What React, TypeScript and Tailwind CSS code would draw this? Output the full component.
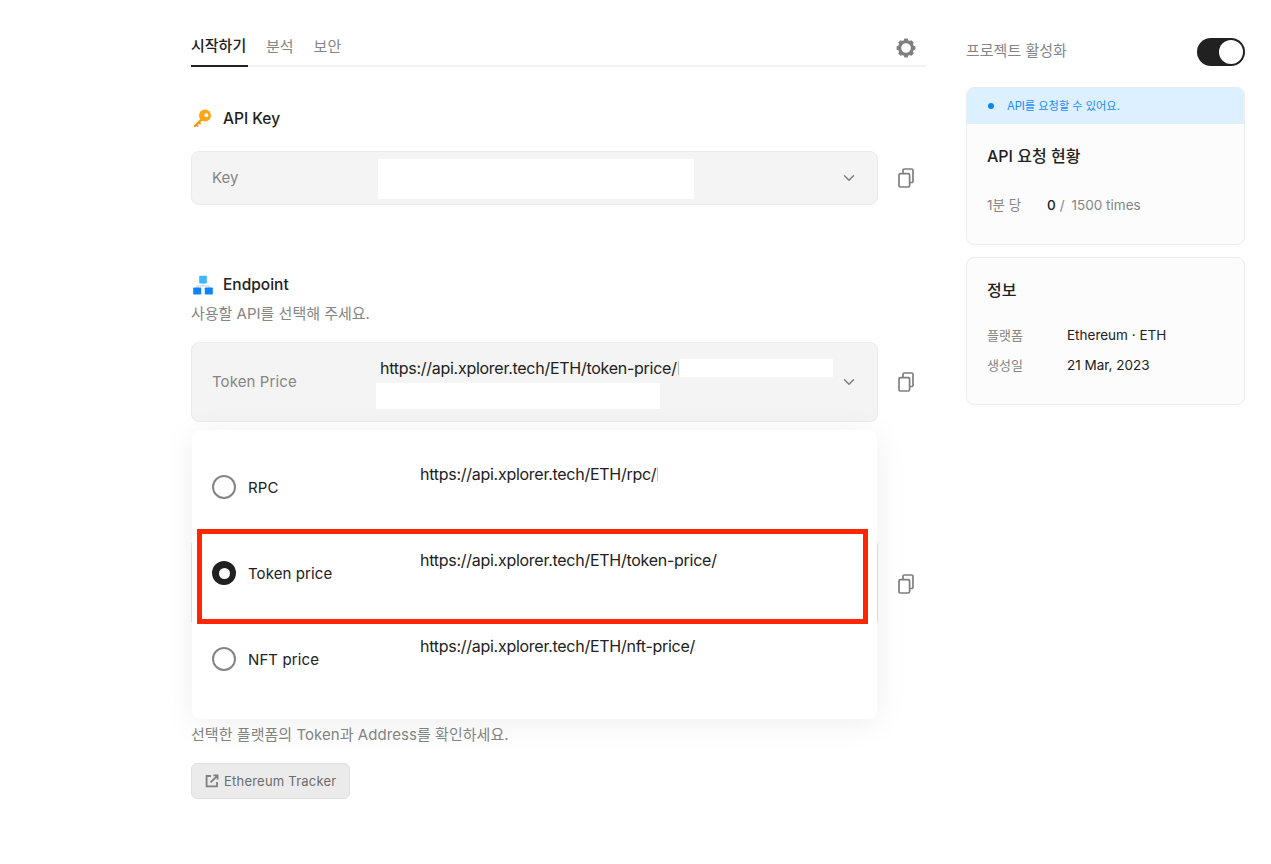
import { LuChevronDown } from "react-icons/lu";

const apis = [
  { name: "RPC", url: "https://api.xplorer.tech/ETH/rpc/", tick: true },
  { name: "Token price", url: "https://api.xplorer.tech/ETH/token-price/", selected: true },
  { name: "NFT price", url: "https://api.xplorer.tech/ETH/nft-price/" },
];

function CopyIcon({ className = "" }: { className?: string }) {
  return (
    <svg width="20" height="20" viewBox="0 0 20 20" fill="none" stroke="#7f7f7f" strokeWidth="1.7" className={`shrink-0 ${className}`}>
      <rect x="3" y="5.6" width="10.6" height="13.4" rx="1.3" />
      <path d="M7 5.4V2.3A1.3 1.3 0 0 1 8.3 1h7.4A1.3 1.3 0 0 1 17 2.3v10.9a1.3 1.3 0 0 1-1.3 1.3h-1.9" />
    </svg>
  );
}

function GearIcon() {
  return (
    <svg width="20" height="20" viewBox="0 0 20 20" fill="#7f7f7f" className="shrink-0">
      <circle cx="10" cy="10" r="6.4" fill="none" stroke="#7f7f7f" strokeWidth="3.2" />
      {[0, 45, 90, 135, 180, 225, 270, 315].map((a) => (
        <rect key={a} x="8" y="0.6" width="4" height="3.4" rx="0.8" transform={`rotate(${a} 10 10)`} />
      ))}
    </svg>
  );
}

function KeyIcon() {
  return (
    <svg width="20" height="20" viewBox="0 0 20 20" className="mt-[2px] shrink-0">
      <path d="M10.4 8 1.4 17l1.4 1.6 1.5-1.4 1.1 1 1.3-1.2-1-1.1 1.2-1.2 1.1 1 1.3-1.2-1.1-1.1 3.6-3.6z" fill="#f79a0e" />
      <circle cx="13" cy="6.6" r="6" fill="#ffa412" />
      <circle cx="14.3" cy="6.2" r="2" fill="#fff" />
    </svg>
  );
}

function EndpointIcon() {
  return (
    <svg width="20" height="20" viewBox="0 0 20 20" className="shrink-0">
      <path d="M10 8v3M4 13v-2h12v2" fill="none" stroke="#c9d0d6" strokeWidth="1" />
      <rect x="6.2" y="0.8" width="7.6" height="7.8" rx="0.8" fill="#3db5ff" />
      <rect x="0.2" y="12.4" width="8" height="7.2" rx="0.8" fill="#0a84ff" />
      <rect x="11.8" y="12.4" width="8" height="7.2" rx="0.8" fill="#0a84ff" />
    </svg>
  );
}

function LinkOutIcon() {
  return (
    <svg width="14" height="14" viewBox="0 0 14 14" fill="none" stroke="#7f7f7f" strokeWidth="1.8" className="shrink-0">
      <path d="M6 2H1.6v10.4H12V8" />
      <path d="M5.6 8.4 12.2 1.8M8.4 1.4h4.2v4.2" />
    </svg>
  );
}

function Radio({ selected }: { selected?: boolean }) {
  return selected ? (
    <span className="flex h-6 w-6 shrink-0 items-center justify-center rounded-full bg-[#212121]">
      <span className="h-[11px] w-[11px] rounded-full bg-white" />
    </span>
  ) : (
    <span className="h-6 w-6 shrink-0 rounded-full border-2 border-[#858585] bg-white" />
  );
}

export default function App() {
  return (
    <div className="flex h-[864px] gap-10 overflow-hidden bg-white pl-[191px] pr-[26px] font-['Inter','Noto_Sans_CJK_KR',sans-serif] text-[#212121]">
      <main className="w-[735px] shrink-0">
        {/* tabs */}
        <div className="flex h-[67px] items-end justify-between border-b-2 border-[#f2f2f2]">
          <div className="flex gap-[20px] text-[15px] leading-6 text-[#858585]">
            <button type="button" className="-mb-[2px] w-[57px] whitespace-nowrap border-b-2 border-[#212121] pb-[7px] text-left font-medium text-[#212121]">
              시작하기
            </button>
            <button type="button" className="-mb-[2px] -ml-[2px] pb-[7px]">분석</button>
            <button type="button" className="-mb-[2px] pb-[7px]">보안</button>
          </div>
          <div className="mb-[7px] mr-[10px]">
            <GearIcon />
          </div>
        </div>

        {/* api key */}
        <div className="mt-[39px] flex h-6 items-center gap-[11px] pl-px font-medium">
          <KeyIcon />
          <span className="mt-[2px] text-[15.5px]">API Key</span>
        </div>
        <div className="mt-[21px] flex items-center gap-[18px]">
          <div className="flex h-[54px] w-[687px] items-center rounded-lg border border-[#ebebeb] bg-[#f4f4f4] pl-5 pr-[19px]">
            <span className="w-[166px] text-[15px] leading-6 text-[#858585]">Key</span>
            <span className="mt-[2px] h-10 w-[316px] bg-white" />
            <LuChevronDown size={18} className="ml-auto text-[#7f7f7f]" />
          </div>
          <CopyIcon />
        </div>

        {/* endpoint */}
        <div className="mt-[68px] flex h-6 items-center gap-[10px] pl-[2px] font-medium">
          <EndpointIcon />
          <span className="text-[15.5px]">Endpoint</span>
        </div>
        <p className="mt-[5px] text-[15px] leading-6 text-[#858585]">사용할 API를 선택해 주세요.</p>

        <div className="mt-4 flex items-center gap-[18px]">
          <div className="relative w-[687px]">
            <div className="flex h-20 items-center rounded-lg border border-[#ebebeb] bg-[#f4f4f4] pl-5 pr-[19px]">
              <span className="w-[164px] shrink-0 text-[15px] tracking-[0.1px] text-[#858585]">Token Price</span>
              <div className="mt-1 flex flex-col gap-[6px]">
                <div className="flex h-[18px] items-center pl-1">
                  <span className="whitespace-nowrap text-base leading-[18px] tracking-[-0.27px]">https://api.xplorer.tech/ETH/token-price/</span>
                  <span className="ml-[1px] h-[14px] w-px bg-[#c4c4c4]" />
                  <span className="ml-[1px] h-[18px] w-[153px] bg-white" />
                </div>
                <span className="h-[26px] w-[284px] bg-white" />
              </div>
              <LuChevronDown size={18} className="ml-auto text-[#7f7f7f]" />
            </div>

            {/* dropdown */}
            <div className="absolute left-[1px] right-[1px] top-full z-10 mt-2 h-[289px] rounded-lg bg-white pt-[14px] shadow-[0_4px_32px_rgba(0,0,0,0.07)]">
              {apis.map((api) => (
                <div key={api.name} className="flex h-[86px] pl-[20px]">
                  <div className="flex h-[86px] w-[208px] shrink-0 items-center gap-3">
                    <Radio selected={api.selected} />
                    <span className="mt-[2px] text-[15px] tracking-[0.1px]">{api.name}</span>
                  </div>
                  <div className="mt-[18px] flex h-6 items-center whitespace-nowrap text-base leading-6 tracking-[-0.27px]">
                    {api.url}
                    {api.tick && <span className="ml-[1px] h-[14px] w-px bg-[#c4c4c4]" />}
                  </div>
                </div>
              ))}
              {/* annotation */}
              <div className="absolute left-[5px] top-[99px] h-[95px] w-[671px] border-[5px] border-[#ff2600]" />
            </div>
          </div>
          <CopyIcon />
        </div>

        <div className="mt-[116px] flex items-center gap-[18px]">
          <div className="h-[90px] w-[687px] rounded-lg border border-[#e3e3e3] bg-[#f4f4f4]" />
          <CopyIcon className="mt-[2px]" />
        </div>

        <p className="mt-[95px] text-[15px] leading-6 tracking-[0.05px] text-[#858585]">선택한 플랫폼의 Token과 Address를 확인하세요.</p>
        <button type="button" className="mt-4 flex h-9 w-[159px] items-center gap-[5px] rounded-md border border-[#e0e0e0] bg-[#ebebeb] pl-[13px] text-[13px] tracking-[0.22px] text-[#6b6b6b]">
          <LinkOutIcon />
          <span className="mt-[2px]">Ethereum Tracker</span>
        </button>
      </main>

      <aside className="w-[279px] shrink-0 pt-[38px]">
        <div className="flex h-7 items-center justify-between">
          <span className="mb-[1px] text-[15px] text-[#858585]">프로젝트 활성화</span>
          <span className="flex h-7 w-12 items-center justify-end rounded-full bg-[#212121] pr-[2px]">
            <span className="h-6 w-6 rounded-full bg-white" />
          </span>
        </div>

        <section className="mt-[21px] h-[158px] overflow-hidden rounded-lg border border-[#ececec] bg-[#fcfcfc]">
          <div className="flex h-[36px] items-center bg-[#ddf0ff] pl-[21px] text-[11.2px] text-[#1a8cff]">
            <span className="h-[6px] w-[6px] rounded-full bg-[#0a84ff]" />
            <span className="ml-[13px]">API를 요청할 수 있어요.</span>
          </div>
          <div className="px-5">
            <h2 className="mt-5 text-base font-medium leading-6">API 요청 현황</h2>
            <div className="mt-[25px] flex text-[13.5px] leading-6 text-[#858585]">
              <span className="w-[60px]">1분 당</span>
              <span className="font-medium text-[#212121]">0</span>
              <span className="ml-[4px]">/</span>
              <span className="ml-[7px]">1500 times</span>
            </div>
          </div>
        </section>

        <section className="mt-[12px] h-[148px] rounded-lg border border-[#ececec] bg-[#fcfcfc] px-5">
          <h2 className="mt-5 text-base font-medium leading-6">정보</h2>
          <div className="mt-[21px] flex flex-col gap-[6px] text-[13.5px] leading-6">
            <div className="flex">
              <span className="w-20 text-[13px] text-[#858585]">플랫폼</span>
              <span>Ethereum · ETH</span>
            </div>
            <div className="flex">
              <span className="w-20 text-[13px] text-[#858585]">생성일</span>
              <span>21 Mar, 2023</span>
            </div>
          </div>
        </section>
      </aside>
    </div>
  );
}
